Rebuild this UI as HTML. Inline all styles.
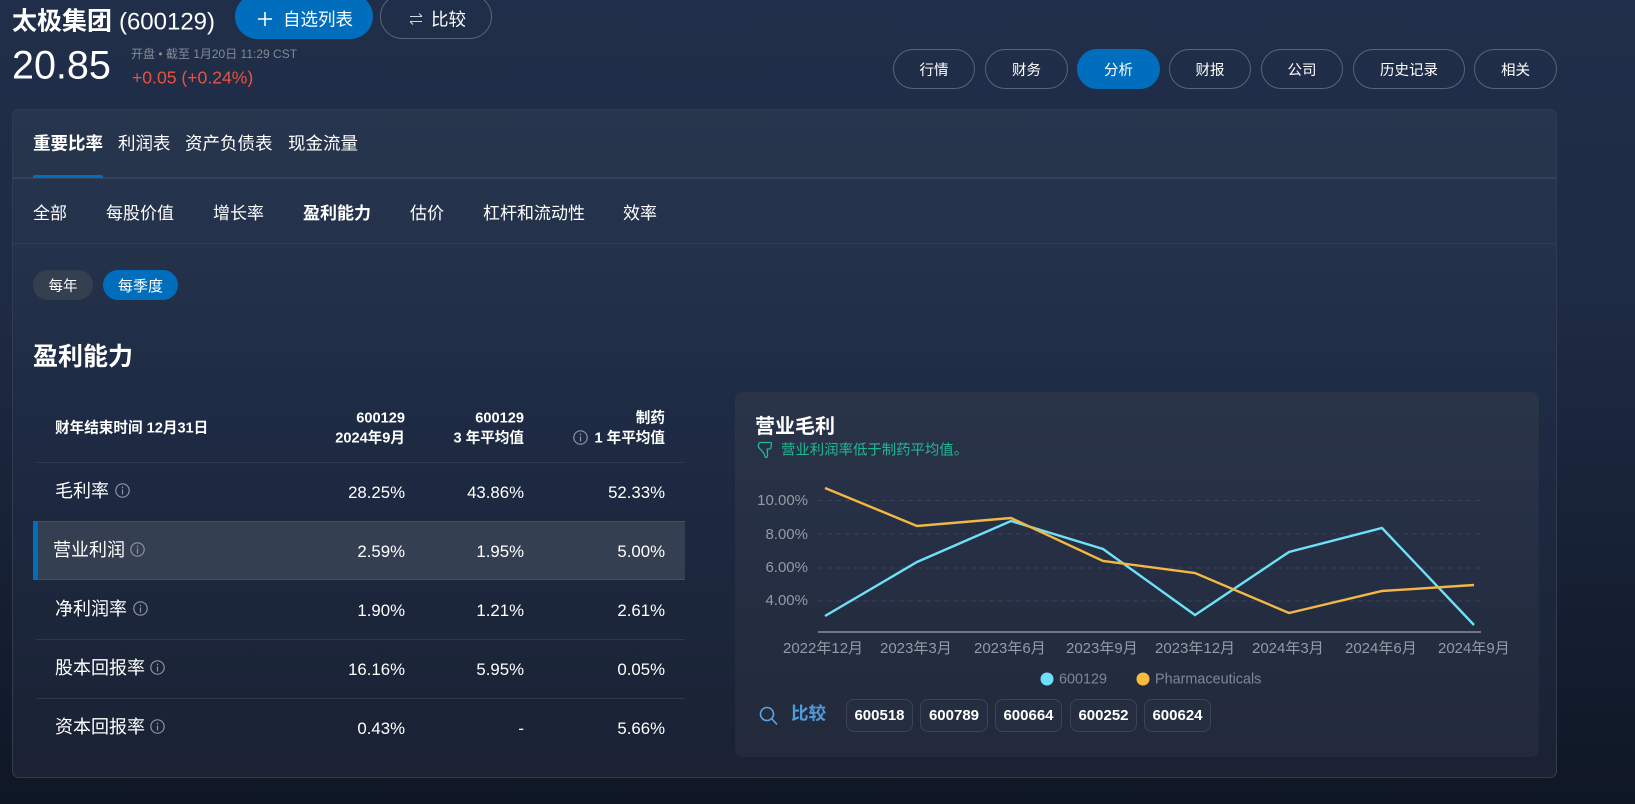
<!DOCTYPE html>
<html lang="zh"><head><meta charset="utf-8"><title>太极集团</title>
<style>
*{box-sizing:border-box}
html,body{margin:0;padding:0;width:1635px;height:804px;overflow:hidden}
body{background:linear-gradient(180deg,#202e49 0,#1e2b44 300px,#0f1725 804px);color:#fff;font-family:"Liberation Sans","Noto Sans CJK SC",sans-serif;position:relative}
.t{position:absolute;white-space:nowrap;transform:translateY(-50%);line-height:1.2}
.r{text-align:right}
.b{font-weight:700}
.box{position:absolute}
.pill{position:absolute;top:49px;height:40px;border:1px solid #5a6475;border-radius:20px;display:flex;align-items:center;justify-content:center;font-size:14.5px;color:#fff}
.ln{position:absolute;height:1px;background:#2e3848}
.chip{position:absolute;top:699px;height:33px;border:1px solid #3b4556;border-radius:8px;background:#252e40;display:flex;align-items:center;justify-content:center;font-size:15px;font-weight:700;padding-bottom:1px}
svg{position:absolute;overflow:visible}
.i{fill:none;stroke:#8d94a0;stroke-width:1.2}
.v{font-size:16.8px}
.a{font-size:15px;color:#949aa6}
.h{font-size:14.6px}
</style></head><body>

<div class="t b" style="left:12px;top:22px;font-size:25px">太极集团 <span style="font-weight:400;font-size:24px">(600129)</span></div>
<div class="box" style="left:235px;top:-6px;width:138px;height:45px;border-radius:23px;background:#016ebd"></div>
<svg style="left:257px;top:11px" width="16" height="16"><path d="M8 1v14M1 8h14" stroke="#fff" stroke-width="1.6" fill="none"/></svg>
<div class="t" style="left:283px;top:20px;font-size:17.5px">自选列表</div>
<div class="box" style="left:380px;top:-6px;width:112px;height:45px;border-radius:23px;border:1px solid #5a6475"></div>
<svg style="left:409px;top:12px" width="14" height="14"><path d="M1 4.5h12M10 1.5l3 3M13 9.5H1M4 12.5l-3-3" stroke="#d5d8dd" stroke-width="1.1" fill="none"/></svg>
<div class="t" style="left:431px;top:20px;font-size:17.5px">比较</div>

<div class="t" style="left:12px;top:66px;font-size:39.5px">20.85</div>
<div class="t" style="left:131px;top:54px;font-size:12px;color:#858a94">开盘 • 截至 1月20日 11:29 CST</div>
<div class="t" style="left:132px;top:78px;font-size:17.6px;color:#e8533f">+0.05 (+0.24%)</div>

<div class="pill" style="left:893px;width:82px">行情</div>
<div class="pill" style="left:985px;width:83px">财务</div>
<div class="pill" style="left:1077px;width:83px;background:#016ebd;border-color:#016ebd">分析</div>
<div class="pill" style="left:1169px;width:82px">财报</div>
<div class="pill" style="left:1261px;width:82px">公司</div>
<div class="pill" style="left:1353px;width:112px">历史记录</div>
<div class="pill" style="left:1474px;width:83px">相关</div>

<div class="box" style="left:12px;top:109px;width:1545px;height:669px;border:1px solid #323c4e;border-radius:7px;background:linear-gradient(180deg,#27354d 0,#24324b 130px,#1e2b44 300px,#1a2233 669px)"></div>
<div class="ln" style="left:13px;top:177px;width:1543px;height:2px;background:#36425a"></div>
<div class="t b" style="left:33px;top:144px;font-size:17.5px">重要比率</div>
<div class="box" style="left:33px;top:175px;width:70px;height:3px;background:#016ebd;border-radius:2px 2px 0 0"></div>
<div class="t" style="left:118px;top:144px;font-size:17.5px">利润表</div>
<div class="t" style="left:185px;top:144px;font-size:17.5px">资产负债表</div>
<div class="t" style="left:288px;top:144px;font-size:17.5px">现金流量</div>

<div class="t" style="left:33px;top:214px;font-size:17px">全部</div>
<div class="t" style="left:106px;top:214px;font-size:17px">每股价值</div>
<div class="t" style="left:213px;top:214px;font-size:17px">增长率</div>
<div class="t b" style="left:303px;top:214px;font-size:17px">盈利能力</div>
<div class="t" style="left:410px;top:214px;font-size:17px">估价</div>
<div class="t" style="left:483px;top:214px;font-size:17px">杠杆和流动性</div>
<div class="t" style="left:623px;top:214px;font-size:17px">效率</div>
<div class="ln" style="left:13px;top:243px;width:1543px;background:#323d53"></div>

<div class="box" style="left:33px;top:270px;width:60px;height:30px;border-radius:15px;background:#343f50;display:flex;align-items:center;justify-content:center;font-size:14.5px">每年</div>
<div class="box" style="left:103px;top:270px;width:75px;height:30px;border-radius:15px;background:#016ebd;display:flex;align-items:center;justify-content:center;font-size:15px">每季度</div>
<div class="t b" style="left:33px;top:357px;font-size:25px">盈利能力</div>

<!-- table header -->
<div class="t b h" style="left:55px;top:428.5px">财年结束时间 12月31日</div>
<div class="t b r h" style="right:1230px;top:419px">600129</div>
<div class="t b r h" style="right:1230px;top:439px">2024年9月</div>
<div class="t b r h" style="right:1111px;top:419px">600129</div>
<div class="t b r h" style="right:1111px;top:439px">3 年平均值</div>
<div class="t b r h" style="right:970px;top:419px">制药</div>
<div class="t b r h" style="right:970px;top:439px">1 年平均值</div>
<svg class="i" style="left:573px;top:430px" width="15" height="15"><circle cx="7.5" cy="7.5" r="6.7"/><path d="M7.5 6.5v5M7.5 3.6v1.6"/></svg>

<div class="ln" style="left:36px;top:462px;width:649px"></div>
<div class="box" style="left:33px;top:521px;width:652px;height:59px;background:#353f52;border-top:1px solid #465062;border-bottom:1px solid #465062"></div>
<div class="box" style="left:33px;top:521px;width:5px;height:59px;background:#016ebd"></div>
<div class="ln" style="left:36px;top:639px;width:649px"></div>
<div class="ln" style="left:36px;top:698px;width:649px"></div>

<div class="t" style="left:55px;top:492px;font-size:18px">毛利率</div>
<svg class="i" style="left:115px;top:483px" width="15" height="15"><circle cx="7.5" cy="7.5" r="6.7"/><path d="M7.5 6.5v5M7.5 3.6v1.6"/></svg>
<div class="t r v" style="right:1230px;top:493px">28.25%</div>
<div class="t r v" style="right:1111px;top:493px">43.86%</div>
<div class="t r v" style="right:970px;top:493px">52.33%</div>

<div class="t" style="left:53px;top:551px;font-size:18px">营业利润</div>
<svg class="i" style="left:130px;top:542px" width="15" height="15"><circle cx="7.5" cy="7.5" r="6.7"/><path d="M7.5 6.5v5M7.5 3.6v1.6"/></svg>
<div class="t r v" style="right:1230px;top:552px">2.59%</div>
<div class="t r v" style="right:1111px;top:552px">1.95%</div>
<div class="t r v" style="right:970px;top:552px">5.00%</div>

<div class="t" style="left:55px;top:610px;font-size:18px">净利润率</div>
<svg class="i" style="left:133px;top:601px" width="15" height="15"><circle cx="7.5" cy="7.5" r="6.7"/><path d="M7.5 6.5v5M7.5 3.6v1.6"/></svg>
<div class="t r v" style="right:1230px;top:611px">1.90%</div>
<div class="t r v" style="right:1111px;top:611px">1.21%</div>
<div class="t r v" style="right:970px;top:611px">2.61%</div>

<div class="t" style="left:55px;top:669px;font-size:18px">股本回报率</div>
<svg class="i" style="left:150px;top:660px" width="15" height="15"><circle cx="7.5" cy="7.5" r="6.7"/><path d="M7.5 6.5v5M7.5 3.6v1.6"/></svg>
<div class="t r v" style="right:1230px;top:670px">16.16%</div>
<div class="t r v" style="right:1111px;top:670px">5.95%</div>
<div class="t r v" style="right:970px;top:670px">0.05%</div>

<div class="t" style="left:55px;top:728px;font-size:18px">资本回报率</div>
<svg class="i" style="left:150px;top:719px" width="15" height="15"><circle cx="7.5" cy="7.5" r="6.7"/><path d="M7.5 6.5v5M7.5 3.6v1.6"/></svg>
<div class="t r v" style="right:1230px;top:729px">0.43%</div>
<div class="t r v" style="right:1111px;top:729px">-</div>
<div class="t r v" style="right:970px;top:729px">5.66%</div>

<!-- chart panel -->
<div class="box" style="left:735px;top:392px;width:804px;height:365px;border-radius:8px;background:linear-gradient(180deg,#2a3449 0,#252e42 180px,#222a3b 100%)"></div>
<div class="t b" style="left:755px;top:427px;font-size:20px">营业毛利</div>
<svg style="left:757px;top:441px" width="16" height="18" fill="none" stroke="#21b894" stroke-width="1.3"><path d="M2 2.6Q2 1.5 3.5 1.5H13Q14.6 1.5 14.4 3L13.8 7Q13.5 8 12.5 8H10.3L10.5 14Q10.5 16.5 9.2 16.5Q8 16.5 7.5 14Q6.5 11 3 8Q1 6 1.3 4.2Z"/></svg>
<div class="t" style="left:781px;top:451px;font-size:14.4px;color:#21b894">营业利润率低于制药平均值。</div>

<svg style="left:0;top:0" width="1635" height="804" fill="none">
<g stroke="#3a4354" stroke-dasharray="5 4"><path d="M818 500.5H1481M818 534H1481M818 568H1481M818 601H1481"/></g>
<path d="M818 632H1481" stroke="#8a909c" stroke-width="1.6"/>
<polyline points="825,616 917,562 1011,521 1103,549 1195,615 1289,552 1382,528 1474,625" stroke="#6ee0f7" stroke-width="2.4"/>
<polyline points="825,488 917,526 1011,518 1103,561 1195,573 1289,613 1382,591 1474,585" stroke="#f2b744" stroke-width="2.4"/>
<circle cx="1047" cy="679" r="6.5" fill="#6ee0fd"/>
<circle cx="1143" cy="679" r="6.5" fill="#fdbb3d"/>
<circle cx="767" cy="714" r="6.5" stroke="#5aa5e0" stroke-width="1.6"/>
<path d="M772 719l5 5.5" stroke="#5aa5e0" stroke-width="1.6"/>
</svg>

<div class="t r a" style="right:827px;top:501px">10.00%</div>
<div class="t r a" style="right:827px;top:534.5px">8.00%</div>
<div class="t r a" style="right:827px;top:568px">6.00%</div>
<div class="t r a" style="right:827px;top:601px">4.00%</div>

<div class="t a" style="left:783px;top:648.5px">2022年12月</div>
<div class="t a" style="left:880px;top:648.5px">2023年3月</div>
<div class="t a" style="left:974px;top:648.5px">2023年6月</div>
<div class="t a" style="left:1066px;top:648.5px">2023年9月</div>
<div class="t a" style="left:1155px;top:648.5px">2023年12月</div>
<div class="t a" style="left:1252px;top:648.5px">2024年3月</div>
<div class="t a" style="left:1345px;top:648.5px">2024年6月</div>
<div class="t a" style="left:1438px;top:648.5px">2024年9月</div>

<div class="t" style="left:1059px;top:680px;font-size:14.4px;color:#7f8794">600129</div>
<div class="t" style="left:1155px;top:680px;font-size:14.4px;color:#7f8794">Pharmaceuticals</div>

<div class="t b" style="left:791px;top:714px;font-size:17.5px;color:#4f9bdc">比较</div>
<div class="chip" style="left:846px;width:67px">600518</div>
<div class="chip" style="left:920px;width:68px">600789</div>
<div class="chip" style="left:995px;width:67px">600664</div>
<div class="chip" style="left:1070px;width:67px">600252</div>
<div class="chip" style="left:1144px;width:67px">600624</div>
</body></html>
